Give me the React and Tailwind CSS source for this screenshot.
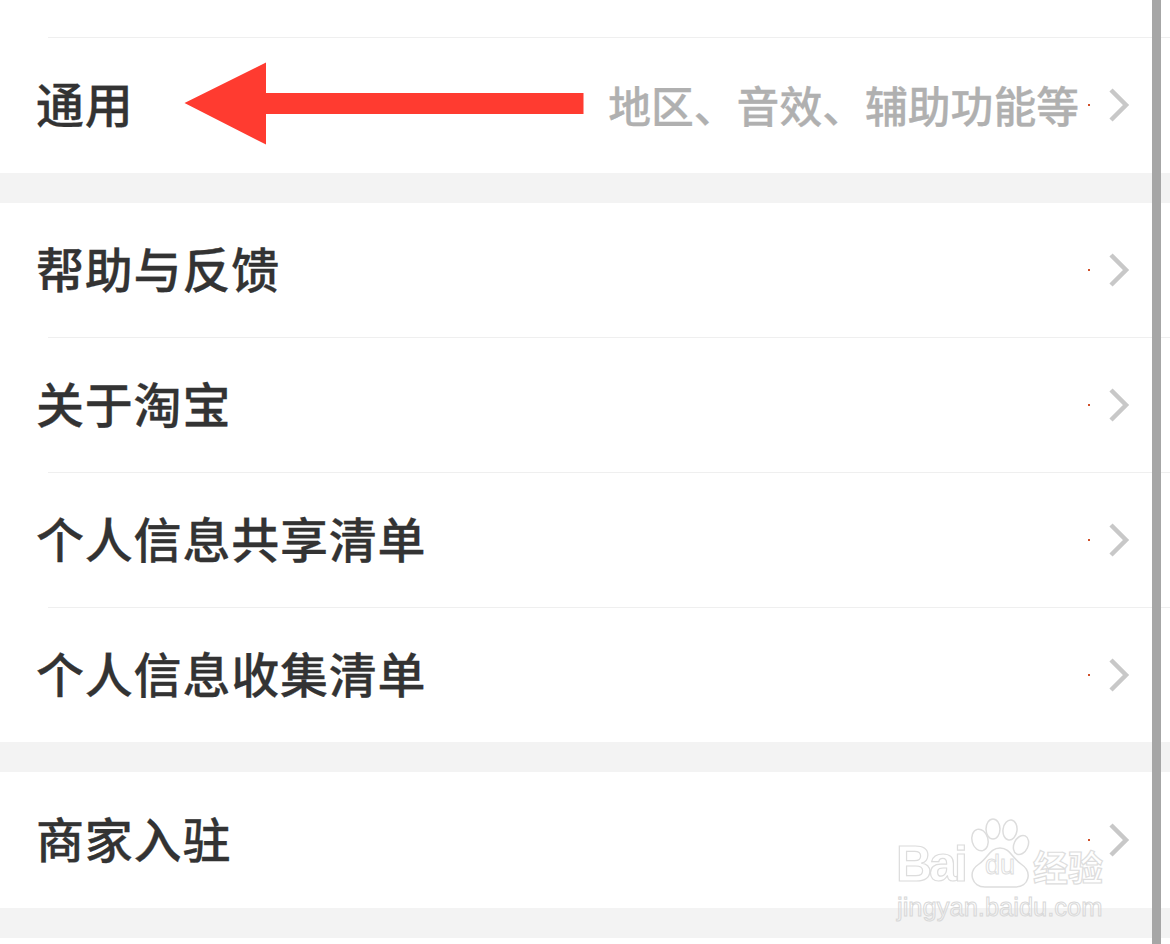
const font = '[font-family:"Noto_Sans_CJK_SC","Liberation_Sans",sans-serif]';

function Chevron() {
    return (
        <svg width="22" height="36" viewBox="0 0 22 36" className="shrink-0" fill="none">
            <path d="M3 3 L18 18 L3 33" stroke="#c8c8c8" strokeWidth="4.5" />
        </svg>
    );
}

function Arrow() {
    return (
        <svg width="400" height="84" viewBox="0 0 400 84" className="absolute left-[184px] top-[25px]">
            <path d="M0.5 41 L82 0.5 V31 H399.5 V52 H82 V82.5 Z" fill="#ff3b30" />
        </svg>
    );
}

function Row({ title, hint, arrow, divider, height }) {
    return (
        <div className={`relative flex items-center pl-[36px] pr-[40px] bg-white ${height}`}>
            {divider && <div className="absolute top-0 left-[48px] right-0 h-px bg-[#efefef]" />}
            <div className="pb-[6px] text-[48px] leading-none font-medium text-[#333333] tracking-[0.8px] [-webkit-text-stroke:0.3px_#333333]">{title}</div>
            {arrow && <Arrow />}
            <div className="ml-auto flex items-center">
                {hint && <div className="pb-[2px] text-[42.8px] leading-none font-medium text-[#b0b0b0] [-webkit-text-stroke:0.3px_#b0b0b0]">{hint}</div>}
                <div className="ml-[9px] w-[2px] h-[2px] bg-[#d0502a]" />
                <div className="ml-[18px]"><Chevron /></div>
            </div>
        </div>
    );
}

function Paw() {
    return (
        <div className="relative shrink-0 w-[62px] h-[70px]">
            <svg width="62" height="70" viewBox="0 0 62 70" fill="#ffffff" stroke="#dddddd" strokeWidth="1.5">
                <ellipse cx="11" cy="22" rx="8" ry="11" transform="rotate(-15 11 22)" />
                <ellipse cx="24" cy="11" rx="7" ry="10" />
                <ellipse cx="41" cy="12" rx="7" ry="10" transform="rotate(8 41 12)" />
                <ellipse cx="52" cy="27" rx="7" ry="10" transform="rotate(25 52 27)" />
                <path d="M31 30 C21 30 19 40 10 46 C-2 54 3 69 16 69 H46 C60 69 64 54 52 46 C43 40 41 30 31 30 Z" />
            </svg>
            <div className="absolute inset-x-0 bottom-[9px] text-center text-[27px] leading-[28px] text-transparent [-webkit-text-stroke:1px_#dddddd] [font-family:'Liberation_Sans',sans-serif]">du</div>
        </div>
    );
}

function Watermark() {
    return (
        <div className="absolute left-[896px] top-[818px] w-[212px] flex flex-col pointer-events-none">
            <div className="flex items-end">
                <div className="w-[73px] shrink-0 text-[50px] leading-[48px] font-bold tracking-[-3px] text-transparent [-webkit-text-stroke:1.2px_#dddddd] [font-family:'Liberation_Sans',sans-serif]">Bai</div>
                <Paw />
                <div className="ml-[2px] text-[35px] leading-[44px] font-bold text-transparent [-webkit-text-stroke:1.2px_#dddddd]">经验</div>
            </div>
            <div className="text-[25.5px] leading-[30px] mt-[4px] ml-[1px] text-transparent [-webkit-text-stroke:1px_#d8d8d8] [font-family:'Liberation_Sans',sans-serif] whitespace-nowrap">jingyan.baidu.com</div>
        </div>
    );
}

export default function App() {
    return (
        <div className={`relative w-[1170px] h-[944px] overflow-hidden bg-[#f3f3f3] ${font}`}>
            <div className="h-[37px] bg-white" />
            <Row title="通用" hint="地区、音效、辅助功能等" arrow divider height="h-[136px]" />
            <div className="h-[30px]" />
            <Row title="帮助与反馈" height="h-[134px]" />
            <Row title="关于淘宝" divider height="h-[135px]" />
            <Row title="个人信息共享清单" divider height="h-[135px]" />
            <Row title="个人信息收集清单" divider height="h-[135px]" />
            <div className="h-[30px]" />
            <Row title="商家入驻" height="h-[136px]" />
            <div className="h-[30px]" />
            <div className="h-[6px] bg-white" />
            <Watermark />
            <div className="absolute top-0 bottom-0 left-[1152px] w-[9px] bg-[#a6a6a6]" />
        </div>
    );
}
